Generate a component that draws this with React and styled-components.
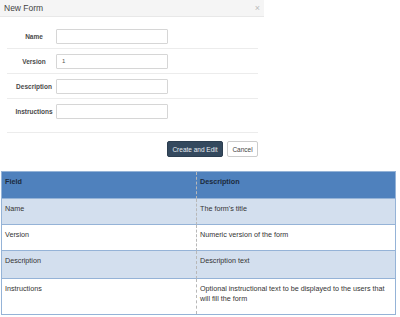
import React from "react";
import styled, { createGlobalStyle } from "styled-components";

const GlobalStyle = createGlobalStyle`
  html, body {
    margin: 0;
    padding: 0;
    background: #fff;
  }
  body {
    width: 400px;
    height: 317px;
    overflow: hidden;
    font-family: "Liberation Sans", Arial, sans-serif;
  }
`;

const Page = styled.div`
  display: flex;
  flex-direction: column;
  width: 400px;
`;

const Modal = styled.div`
  width: 264px;
  background: #fff;
`;

const ModalHeader = styled.div`
  height: 17px;
  background: #f5f5f5;
  border-bottom: 1px solid #e8e8e8;
  display: flex;
  align-items: center;
  justify-content: space-between;
  padding: 0 4px 0 4px;
  box-sizing: border-box;
`;

const Title = styled.div`
  font-size: 8.5px;
  color: #444;
`;

const Close = styled.span`
  font-size: 9px;
  color: #bbb;
  line-height: 1;
`;

const FormBody = styled.div`
  padding: 7px 6px 8px 7px;
`;

const FormRow = styled.div`
  display: flex;
  align-items: center;
  height: 25px;
  box-sizing: border-box;
  border-bottom: ${(p) => (p.$last ? "none" : "1px solid #ececec")};
`;

const Label = styled.label`
  width: 42px;
  margin-left: 6px;
  text-align: center;
  font-size: 6.5px;
  font-weight: bold;
  color: #4a4a4a;
`;

const Input = styled.div`
  margin-left: 1px;
  width: 105px;
  height: 13px;
  border: 1px solid #d6d6d6;
  border-radius: 1px;
  font-size: 6px;
  color: #555;
  display: flex;
  align-items: center;
  padding-left: 5px;
`;

const Footer = styled.div`
  border-top: 1px solid #ececec;
  margin: 0 6px 0 7px;
  padding: 8px 0 7px;
  display: flex;
  justify-content: flex-end;
  gap: 4px;
`;

const Button = styled.button`
  height: 16px;
  padding: 0;
  white-space: nowrap;
  font-family: "Liberation Sans", Arial, sans-serif;
  font-size: 6.5px;
  border-radius: 2px;
  border: 1px solid ${(p) => (p.$primary ? "#2c3e50" : "#ccc")};
  background: ${(p) => (p.$primary ? "#34495e" : "#fff")};
  color: ${(p) => (p.$primary ? "#e8edf2" : "#444")};
  width: ${(p) => p.$w}px;
`;

const Table = styled.div`
  margin: 7px 0 0 1px;
  width: 395px;
  border: 1px solid #95b3d7;
  box-sizing: border-box;
  display: grid;
  grid-template-columns: 195px 1fr;
  font-family: "Liberation Sans", Arial, sans-serif;
  font-size: 7.2px;
`;

const Cell = styled.div`
  height: ${(p) => p.$h}px;
  box-sizing: border-box;
  padding: 5px 4px 0 3px;
  line-height: 10px;
  background: ${(p) => (p.$head ? "#4f81bd" : p.$shade ? "#d3dfee" : "#fff")};
  color: ${(p) => (p.$head ? "#1b2a3c" : "#333")};
  font-weight: ${(p) => (p.$head ? "bold" : "normal")};
  border-bottom: ${(p) => (p.$lastRow ? "none" : "1px solid #95b3d7")};
  border-right: ${(p) => (p.$first ? "1px dashed #b8b8b8" : "none")};
`;

const rows = [
  { field: "Name", desc: "The form's title", h: 26 },
  { field: "Version", desc: "Numeric version of the form", h: 26 },
  { field: "Description", desc: "Description text", h: 28 },
  {
    field: "Instructions",
    desc: "Optional instructional text to be displayed to the users that will fill the form",
    h: 35,
  },
];

const fields = [
  { label: "Name", value: "" },
  { label: "Version", value: "1" },
  { label: "Description", value: "" },
  { label: "Instructions", value: "" },
];

export default function App() {
  return (
    <Page>
      <GlobalStyle />
      <Modal>
        <ModalHeader>
          <Title>New Form</Title>
          <Close>×</Close>
        </ModalHeader>
        <FormBody>
          {fields.map((f, i) => (
            <FormRow key={f.label} $last={i === fields.length - 1}>
              <Label>{f.label}</Label>
              <Input>{f.value}</Input>
            </FormRow>
          ))}
        </FormBody>
        <Footer>
          <Button $primary $w={56}>Create and Edit</Button>
          <Button $w={31}>Cancel</Button>
        </Footer>
      </Modal>
      <Table>
        <Cell $head $first $h={27}>Field</Cell>
        <Cell $head $h={27}>Description</Cell>
        {rows.map((r, i) => (
          <React.Fragment key={r.field}>
            <Cell $first $shade={i % 2 === 0} $h={r.h} $lastRow={i === rows.length - 1}>
              {r.field}
            </Cell>
            <Cell $shade={i % 2 === 0} $h={r.h} $lastRow={i === rows.length - 1}>
              {r.desc}
            </Cell>
          </React.Fragment>
        ))}
      </Table>
    </Page>
  );
}
